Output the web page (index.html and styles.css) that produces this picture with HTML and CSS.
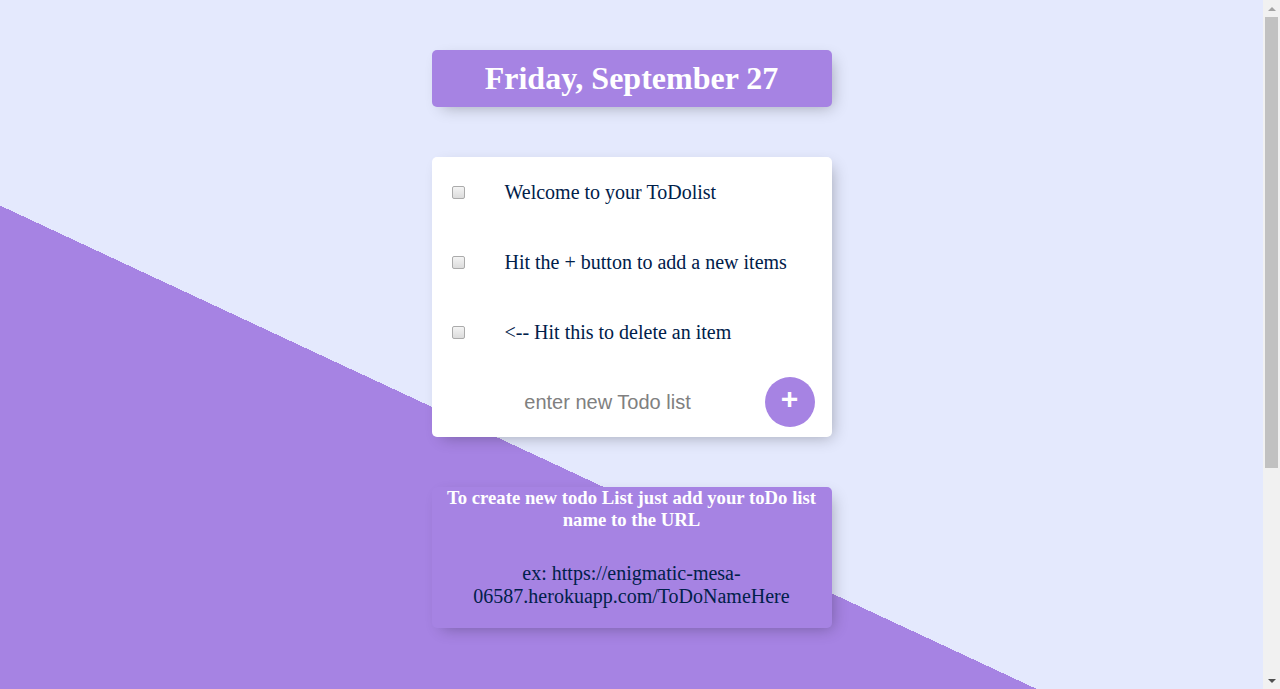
FILE: index.html
```html
<!DOCTYPE html>
<html lang="en">
<head>
<meta charset="utf-8">
<title>To Do List</title>
<link rel="stylesheet" href="styles.css">
</head>
<body>
  <div class="box heading">
    <h1>Friday, September 27</h1>
  </div>

  <div class="box">
    <div class="item">
      <input type="checkbox" class="check">
      <p class="item-text">Welcome to your ToDolist</p>
    </div>
    <div class="item">
      <input type="checkbox" class="check">
      <p class="item-text">Hit the + button to add a new items</p>
    </div>
    <div class="item">
      <input type="checkbox" class="check">
      <p class="item-text">&lt;-- Hit this to delete an item</p>
    </div>
    <form class="item add-form" onsubmit="return false">
      <input type="text" class="new-item" placeholder="enter new Todo list" autocomplete="off">
      <button type="submit" class="add-btn">+</button>
    </form>
  </div>

  <div class="box info">
    <h3 class="info-title">To create new todo List just add your toDo list name to the URL</h3>
    <p class="info-text">ex: https://enigmatic-mesa-06587.herokuapp.com/ToDoNameHere</p>
  </div>

  <div class="scrollbar" aria-hidden="true">
    <div class="sb-btn"><span class="sb-arrow-up"></span></div>
    <div class="sb-thumb"></div>
    <div class="sb-rest"></div>
    <div class="sb-btn"><span class="sb-arrow-down"></span></div>
  </div>
</body>
</html>
```

FILE: styles.css
```css
html {
  width: calc(100% - 17px);
  background-color: #E4E9FD;
  background-image: linear-gradient(25deg, #A683E3 50%, #E4E9FD 50%);
  min-height: 1000px;
  font-family: "Liberation Serif", "Times New Roman", serif;
}

body {
  margin: 0;
  padding: 0;
}

.box {
  max-width: 400px;
  margin: 50px auto;
  background: #ffffff;
  border-radius: 5px;
  box-shadow: 5px 5px 15px -5px rgba(0, 0, 0, 0.3);
}

.heading {
  background-color: #A683E3;
  text-align: center;
}

.heading h1 {
  margin: 21px 0;
  padding: 10px;
  color: #ffffff;
  font-size: 32px;
  font-weight: bold;
}

.item {
  min-height: 70px;
  display: flex;
  align-items: center;
}

.check {
  appearance: none;
  -webkit-appearance: none;
  box-sizing: border-box;
  flex: none;
  margin: 20px;
  width: 13px;
  height: 13px;
  border: 1px solid #ABABAB;
  border-radius: 2px;
  background: linear-gradient(#F4F4F4, #DCDCDC);
}

.item-text {
  margin: 0;
  padding: 20px;
  font-size: 20px;
  font-weight: 200;
  color: #00204a;
}

.add-form {
  margin: 0;
  padding-left: 20px;
}

.new-item {
  box-sizing: border-box;
  width: 312px;
  height: 60px;
  margin: 0;
  padding: 1px 2px;
  border: none;
  background: transparent;
  text-align: center;
  font-family: "Liberation Sans", Arial, sans-serif;
  font-size: 20px;
  color: #333333;
}

.new-item::placeholder {
  color: grey;
  opacity: 1;
}

.new-item:focus {
  outline: none;
}

.add-btn {
  box-sizing: border-box;
  width: 50px;
  min-height: 50px;
  margin-left: 1px;
  padding: 0 0 6px;
  border: 0;
  border-radius: 50%;
  background-color: #A683E3;
  color: #ffffff;
  font-family: "Liberation Sans", Arial, sans-serif;
  font-size: 30px;
  font-weight: bold;
  line-height: 1;
  cursor: pointer;
}

.info {
  background-color: #A683E3;
  text-align: center;
}

.info-title {
  margin: 18px 0 11px;
  color: #ffffff;
  font-size: 18.72px;
  font-weight: bold;
}

.info-text {
  margin: 0;
  padding: 20px;
  font-size: 20px;
  color: #00204a;
}

/* window scrollbar drawn over the right edge */
.scrollbar {
  position: fixed;
  top: 0;
  right: 0;
  width: 17px;
  height: 100vh;
  background: #F1F1F1;
  display: flex;
  flex-direction: column;
}

.sb-btn {
  height: 17px;
  flex: none;
  display: flex;
  align-items: center;
  justify-content: center;
}

.sb-arrow-up {
  width: 0;
  height: 0;
  border-left: 4px solid transparent;
  border-right: 4px solid transparent;
  border-bottom: 4px solid #A3A3A3;
}

.sb-arrow-down {
  width: 0;
  height: 0;
  border-left: 4px solid transparent;
  border-right: 4px solid transparent;
  border-top: 4px solid #505050;
}

.sb-thumb {
  flex: none;
  height: 451px;
  margin: 0 2px;
  background: #C1C1C1;
}

.sb-rest {
  flex: 1;
}
```
